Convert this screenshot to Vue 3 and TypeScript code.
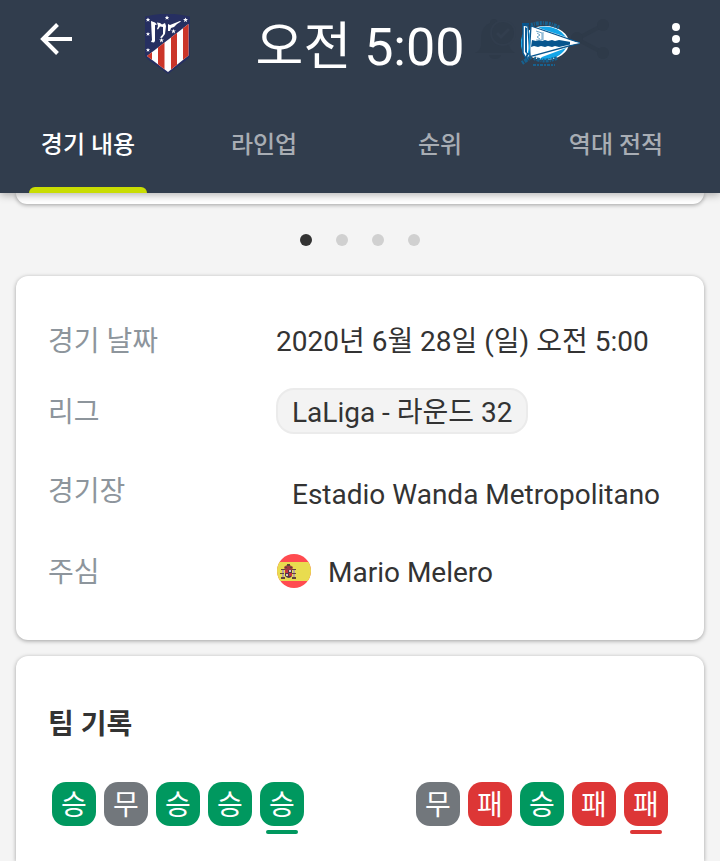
<script setup lang="ts">
import { ref } from 'vue'

type Outcome = 'win' | 'draw' | 'loss'

const tabs: string[] = ['경기 내용', '라인업', '순위', '역대 전적']
const activeTab = ref(0)
const activeSlide = ref(0)

const outcomeText: Record<Outcome, string> = { win: '승', draw: '무', loss: '패' }
const form: Outcome[][] = [
  ['win', 'draw', 'win', 'win', 'win'],
  ['draw', 'loss', 'win', 'loss', 'loss'],
]
</script>

<template>
  <div class="page">
    <header class="header">
      <div class="toolbar">
        <button class="icon-button back" type="button" aria-label="뒤로">
          <svg width="32" height="32" viewBox="0 0 32 32">
            <path d="M32 16H3M17.500 1.500L3 16l14.500 14.500" fill="none" stroke="#fff" stroke-width="4" />
          </svg>
        </button>

        <div class="matchup">
          <svg class="crest" width="60" height="60" viewBox="3 0 60 60" role="img" aria-label="Atlético Madrid">
            <defs>
              <clipPath id="stripes"><path d="M10 42L51.500 10V41.500L31 58z" /></clipPath>
            </defs>
            <path d="M8 2.500Q30-3 53 2.500V42Q52 44 50 45.500L31 60 11 45.500Q8 43.500 8 41z" fill="#262f61" />
            <g clip-path="url(#stripes)">
              <path d="M8 0h46v60H8z" fill="#fff" />
              <path d="M9 0h6v60H9zM21 0h6.500v60H21zM34 0h6v60h-6zM46 0h6v60h-6z" fill="#cb3529" />
            </g>
            <path d="M14 7l4 1.500 2 2-2 .5v16l-1 1.500-3-.5 1-2zM20 8.500l3 .5 2 1.500 3-1.500 1 3-1 8-3 4-2-.5 3-3.500v-7l-3-.5-2 3-1-.5 1-3zM31 10l2 1 10-4 1 .5-4 2.500-3 3-3 1-1 3h-2z" fill="#fff" />
            <path d="M11 3.500l.7 1.500h1.600l-1.300 1 .5 1.700-1.500-1-1.500 1 .5-1.700-1.300-1h1.600zM30 1.500l.7 1.500h1.600l-1.300 1 .5 1.700-1.500-1-1.500 1 .5-1.700-1.300-1h1.600zM48.500 3.500l.7 1.600h1.800l-1.500 1.200.6 2-1.600-1.200-1.600 1.200.6-2L46 5.100h1.800zM36.500 15l.7 1.500h1.700l-1.400 1.100.6 1.800-1.600-1.100-1.600 1.100.6-1.800-1.400-1.100h1.700zM24.500 24l.7 1.500h1.700l-1.400 1.100.6 1.800-1.600-1.100-1.600 1.100.6-1.800-1.400-1.100h1.700zM11 18l.6 1.300h1.500l-1.200 1 .5 1.500-1.400-.9-1.400.9.5-1.500-1.200-1h1.500zM11 34l.6 1.300h1.500l-1.200 1 .5 1.500-1.400-.9-1.400.9.5-1.500-1.200-1h1.500z" fill="#fff" />
          </svg>

          <h1 class="kickoff">오전 5:00</h1>

          <div class="away">
            <svg class="ghost" width="136" height="44" viewBox="0 0 136 44" aria-hidden="true">
              <path d="M0 35q5-2 6-7V19Q7 8 15 5q0-4 4-4 3 0 4 4l5 3v17h6q0 7 6 10zM14 37h12q-1 4-6 4t-6-4z" fill="#2e3a49" />
              <circle cx="28" cy="15" r="13" fill="#313d4d" />
              <circle cx="28" cy="15" r="11" fill="#2e3a49" />
              <path d="M22 15l4 4 8-8" fill="none" stroke="#323e4e" stroke-width="3" />
              <path d="M128 7l-26 14 26 14" fill="none" stroke="#2e3a49" stroke-width="4" />
              <g fill="#2e3a49"><circle cx="128" cy="7" r="6" /><circle cx="102" cy="20" r="6" /><circle cx="128" cy="35" r="6" /></g>
            </svg>
            <svg class="crest" width="60" height="60" viewBox="0 0 60 60" role="img" aria-label="Deportivo Alavés">
              <ellipse cx="25" cy="29" rx="24" ry="17" fill="#fff" />
              <path d="M18 13Q37 10 46 23L22 15zM22 43L46 34Q38 47 19 46z" fill="#13a5e8" />
              <ellipse cx="5" cy="29" rx="4" ry="11" fill="#13a5e8" />
              <path d="M11 12L60 29 9 43z" fill="#fff" stroke="#07558e" stroke-width="1.300" />
              <path d="M12 26l4 1 3-1 3 1 3-1 3 1 4-1 3 1 4-1 18 3-18 4-4-1-3 1-4-1-3 1-4-1-3 1-4-1-3 1z" fill="#07558e" />
              <path d="M50 27l10 2-10 2z" fill="#fff" />
              <path d="M3 11l5 1 2 30-3 4-4-7z" fill="#fff" stroke="#07558e" stroke-width="1.500" />
              <path d="M5 13l2 1v26l-2-2z" fill="#075b97" />
              <path d="M8 14q4 12 1 27l-2 1q4-13 1-28z" fill="#13a5e8" />
              <path d="M16 17l6 2v7h-6M17 19l3 2-3 2 3 2M23 18v8" fill="none" stroke="#6fa5c8" stroke-width="1" />
              <path d="M2 10h7M8 39l-3 8" stroke="#07558e" stroke-width="2" />
              <path d="M11 11Q26 6 40 14" fill="none" stroke="#17618f" stroke-width="4" stroke-dasharray="2 1 1 1 3 1" />
              <path d="M2 49L11 43M14 44Q24 49 37 44" fill="none" stroke="#17618f" stroke-width="4" stroke-dasharray="2 1 3 1 1 1" />
              <path d="M13 51h22" stroke="#17618f" stroke-width="2" stroke-dasharray="3 1 2 1" />
            </svg>
          </div>
        </div>

        <button class="icon-button more" type="button" aria-label="더보기">
          <svg width="8" height="32" viewBox="0 0 8 32" fill="#fff">
            <circle cx="4" cy="4" r="4" /><circle cx="4" cy="16" r="4" /><circle cx="4" cy="28" r="4" />
          </svg>
        </button>
      </div>

      <nav class="tabs">
        <button
          v-for="(tab, i) in tabs"
          :key="tab"
          type="button"
          class="tab"
          :class="{ active: i === activeTab }"
          @click="activeTab = i"
        >
          {{ tab }}
        </button>
      </nav>
    </header>

    <main class="content">
      <section class="card carousel"></section>

      <div class="dots">
        <button
          v-for="n in 4"
          :key="n"
          type="button"
          class="dot"
          :class="{ current: n - 1 === activeSlide }"
          :aria-label="`${n}`"
          @click="activeSlide = n - 1"
        ></button>
      </div>

      <section class="card details">
        <dl class="facts">
          <div class="fact">
            <dt>경기 날짜</dt>
            <dd class="date">2020년 6월 28일 (일) 오전 5:00</dd>
          </div>
          <div class="fact">
            <dt>리그</dt>
            <dd><a class="league" href="#league">LaLiga - 라운드 32</a></dd>
          </div>
          <div class="fact venue">
            <dt>경기장</dt>
            <dd><a class="stadium" href="#stadium">Estadio Wanda Metropolitano</a></dd>
          </div>
          <div class="fact">
            <dt>주심</dt>
            <dd class="referee">
              <svg width="36" height="36" viewBox="0 0 36 36" aria-hidden="true">
                <defs><clipPath id="disc"><circle cx="18" cy="18" r="17" /></clipPath></defs>
                <g clip-path="url(#disc)">
                  <path d="M0 0h36v36H0z" fill="#ff4b50" />
                  <path d="M0 9h36v19H0z" fill="#e9dc4f" />
                </g>
                <path d="M6 16h2v9H6zM17 16h2v9h-2z" fill="#b9a3a0" />
                <path d="M5 16h4v1H5zM16 16h4v1h-4zM5 24h4v2H5zM16 24h4v2h-4zM4 20h4v1H4zM16 20h4v1h-4z" fill="#63453c" />
                <path d="M8 14q4-4 9 0l-1 3H9z" fill="#a03a43" />
                <path d="M11 11h3v2h-3zM9 14h2v1H9zM14 14h2v1h-2z" fill="#5a4a35" />
                <path d="M9 17h7v6q-3 4-7 0z" fill="#52364a" />
                <path d="M9 17h3v3H9zM13 20h3v3h-3z" fill="#c8323e" />
                <path d="M13 17h2v2h-2zM10 21h2v2h-2z" fill="#d8c7c0" />
              </svg>
              <span class="name">Mario Melero</span>
            </dd>
          </div>
        </dl>
      </section>

      <section class="card record">
        <h2 class="title">팀 기록</h2>
        <div class="form">
          <ul v-for="(team, t) in form" :key="t" class="results">
            <li v-for="(outcome, i) in team" :key="i" class="result" :class="outcome">
              <span class="badge">{{ outcomeText[outcome] }}</span>
              <span v-if="i === team.length - 1" class="latest"></span>
            </li>
          </ul>
        </div>
      </section>
    </main>
  </div>
</template>

<style>
body {
  background: #f4f4f4;
}
</style>

<style scoped>
.page {
  display: flex;
  flex-direction: column;
  min-height: 100vh;
  overflow: hidden;
  background: #f4f4f4;
  color: #333;
  font-family: Roboto, "Noto Sans CJK KR", sans-serif;
  font-size: 28px;
  line-height: 32px;
}

button {
  padding: 0;
  border: 0;
  background: none;
  font: inherit;
  cursor: pointer;
}

.header {
  position: relative;
  z-index: 1;
  background: #313d4d;
  box-shadow: 0 2px 8px rgba(0, 0, 0, 0.3);
}

.toolbar {
  display: flex;
  justify-content: space-between;
  align-items: flex-start;
  height: 97px;
  padding: 0 40px;
  box-sizing: border-box;
}

.icon-button {
  display: flex;
  width: 32px;
  padding: 23px 0;
}

.more {
  justify-content: flex-end;
}

.matchup {
  display: flex;
  align-items: center;
  gap: 56px;
  padding-top: 14px;
}

.crest {
  position: relative;
  display: block;
}

.kickoff {
  margin: 0;
  padding-top: 8px;
  color: #fff;
  font-size: 52px;
  font-weight: 400;
  line-height: 52px;
  white-space: nowrap;
}

.away {
  position: relative;
}

.ghost {
  position: absolute;
  left: -45px;
  top: 4px;
}

.tabs {
  display: grid;
  grid-template-columns: repeat(4, 1fr);
  height: 96px;
  padding-right: 16px;
}

.tab {
  position: relative;
  color: #a8adb4;
  font-size: 24px;
  font-weight: 500;
}

.tab.active {
  color: #fff;
}

.tab.active::after {
  content: "";
  position: absolute;
  right: 29px;
  bottom: 0;
  left: 29px;
  height: 6px;
  border-radius: 6px 6px 0 0;
  background: #c9dd03;
}

.content {
  display: flex;
  flex: 1;
  flex-direction: column;
  padding: 0 16px;
}

.card {
  border-radius: 12px;
  background: #fff;
  box-shadow: 0 1px 4px rgba(0, 0, 0, 0.35);
}

.carousel {
  height: 11px;
  border-radius: 0 0 12px 12px;
}

.dots {
  display: flex;
  justify-content: center;
  align-items: center;
  gap: 24px;
  height: 72px;
}

.dot {
  width: 12px;
  height: 12px;
  border-radius: 50%;
  background: #d0d0d0;
}

.dot.current {
  background: #333;
}

.details {
  padding: 46px 32px 51px;
}

.facts {
  display: flex;
  flex-direction: column;
  gap: 30px;
  margin: 0;
}

.fact {
  display: grid;
  grid-template-columns: 228px 1fr;
  align-items: center;
}

dt,
.date,
.name {
  padding-top: 4px;
}

dt {
  color: #8d959c;
}

dd {
  margin: 0;
  white-space: nowrap;
}

a {
  color: inherit;
  text-decoration: none;
}

.league {
  display: inline-block;
  padding: 7px 14px 3px;
  border: 2px solid #ebebeb;
  border-radius: 18px;
  background: #f3f3f3;
}

.league,
.stadium {
  vertical-align: top;
}

.venue {
  align-items: start;
}

.venue dt {
  line-height: 48px;
}

.stadium {
  display: inline-block;
  padding: 15px 16px 12px;
}

.referee {
  display: flex;
  align-items: center;
  gap: 16px;
}

.record {
  flex: 1;
  margin-top: 16px;
  padding: 48px 32px 27px;
  border-radius: 12px 12px 0 0;
}

.title {
  margin: 0;
  padding-top: 4px;
  font-size: 28px;
  font-weight: 700;
  line-height: 34px;
}

.form {
  display: flex;
  justify-content: space-between;
  margin-top: 40px;
  padding: 0 4px;
}

.results {
  display: flex;
  gap: 8px;
  margin: 0;
  padding: 0;
  list-style: none;
}

.result {
  display: flex;
  flex-direction: column;
  align-items: center;
  gap: 4px;
}

.badge {
  width: 44px;
  padding-top: 4px;
  border-radius: 14px;
  color: #fff;
  line-height: 40px;
  text-align: center;
}

.latest {
  width: 32px;
  height: 4px;
  border-radius: 2px;
}

.win > span {
  background: #00985f;
}

.draw > span {
  background: #72777c;
}

.loss > span {
  background: #dd3636;
}
</style>
